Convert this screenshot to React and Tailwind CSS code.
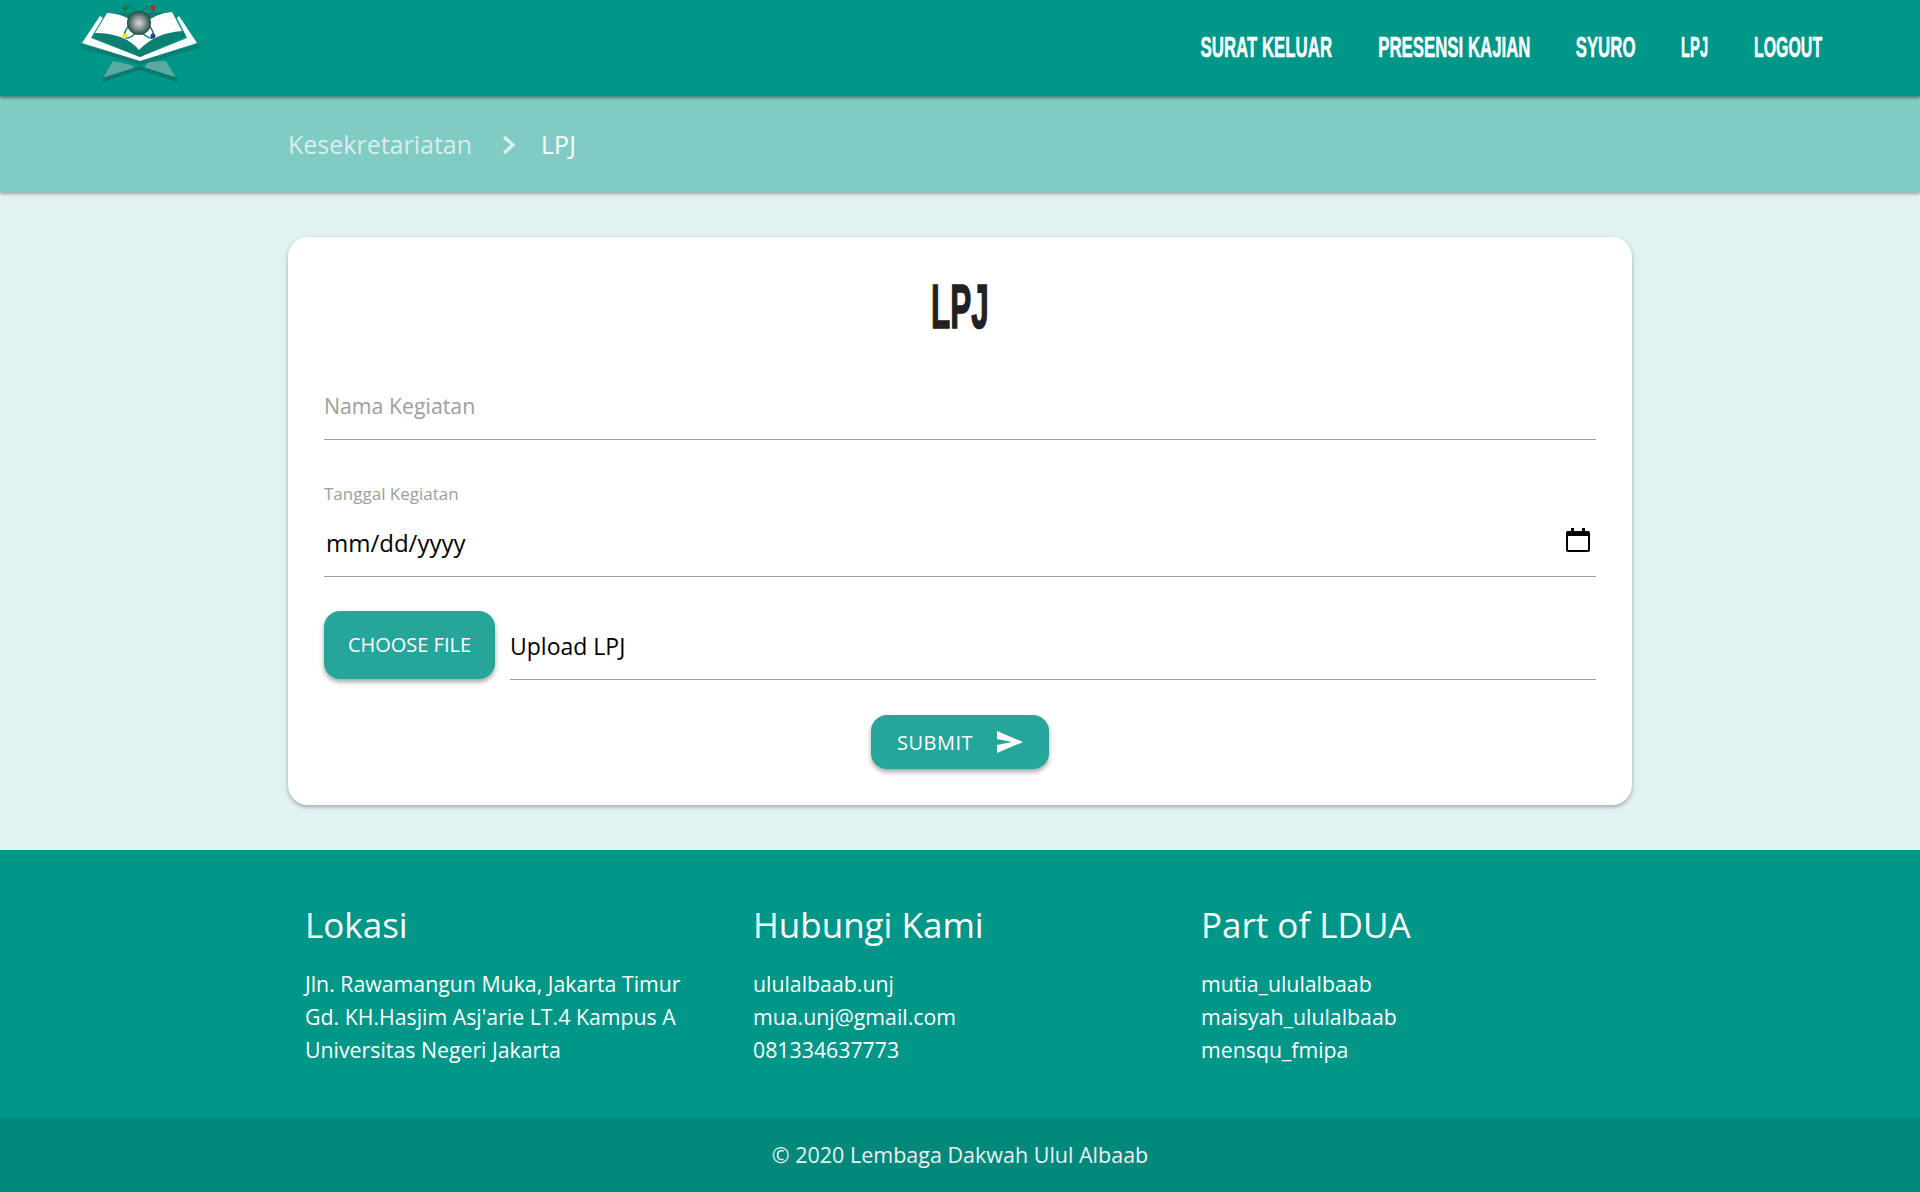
const sans = "font-['Open_Sans','Noto_Sans',sans-serif]";

const Logo = () => (
  <svg width="120" height="80" viewBox="80 4 120 80" aria-hidden="true">
    <defs>
      <radialGradient id="ball">
        <stop offset="0%" stopColor="#dcdcdc" />
        <stop offset="55%" stopColor="#7f8f8c" />
        <stop offset="100%" stopColor="#1f4a44" />
      </radialGradient>
    </defs>
    {/* stand */}
    <polygon points="103,78 113,61 131,65 136,70" fill="#5ba99f" />
    <polygon points="176,78 166,61 148,62 144,68" fill="#5ba99f" />
    <polygon points="102,78 140,66 178,78 177,82 140,70 103,82" fill="#0b7a6e" />
    {/* cover */}
    <polygon points="80,44 140,60 200,44 199,48 140,65 81,48" fill="#0b7f72" />
    <polygon points="82,43 100,16 103,18 91,38 140,57 187,38 177,18 179,16 197,43 140,61" fill="#fff" />
    {/* pages */}
    <polygon points="92,37 106,13 172,12 186,36 140,57" fill="#0b7f72" />
    <path d="M107,13 Q125,13 139,27 Q155,13 172,12 L182,31 Q155,33 139,50 Q125,33 95,33 Z" fill="#fff" />
    {/* atom */}
    <ellipse cx="139" cy="22" rx="6" ry="21" fill="none" stroke="#0b7f72" strokeWidth="1.5" transform="rotate(-42 139 22)" />
    <ellipse cx="139" cy="22" rx="6" ry="21" fill="none" stroke="#0b7f72" strokeWidth="1.5" transform="rotate(42 139 22)" />
    <circle cx="139" cy="23" r="12" fill="url(#ball)" />
    <circle cx="125" cy="8" r="2.5" fill="#1d7a2e" />
    <circle cx="153" cy="8" r="2.5" fill="#c9202c" />
    <circle cx="125" cy="36" r="2.5" fill="#f2e225" />
    <circle cx="153" cy="36" r="2.5" fill="#2b3a9e" />
  </svg>
);

const navLinks = [
  { label: "SURAT KELUAR", width: "w-[132px]", scale: "scale-x-[0.58]" },
  { label: "PRESENSI KAJIAN", width: "w-[154px]", scale: "scale-x-[0.58]" },
  { label: "SYURO", width: "w-[60px]", scale: "scale-x-[0.58]" },
  { label: "LPJ", width: "w-[28px]", scale: "scale-x-[0.51]" },
  { label: "LOGOUT", width: "w-[68px]", scale: "scale-x-[0.55]" },
];

const FooterCol = ({ title, lines }) => (
  <div className="w-[448px] px-[17px]">
    <h5 className="text-[35px] leading-[42px] mb-[21px]">{title}</h5>
    {lines.map((line) => (
      <p key={line} className="text-[21.3px] leading-[33px]">{line}</p>
    ))}
  </div>
);

export default function App() {
  return (
    <div className={`${sans} min-h-[1192px] bg-[#e0f2f1] flex flex-col`}>
      {/* Navbar */}
      <nav className="relative z-20 h-[96px] bg-[#009688] shadow-[0_2px_3px_rgba(0,0,0,0.4)] flex items-start justify-between pl-[80px] pr-[98px]">
        <div className="pt-[4px]">
          <Logo />
        </div>
        <ul className="flex pt-[28px] gap-[45px] font-['Liberation_Sans',sans-serif] font-bold text-white text-[29px] leading-[38px] [-webkit-text-stroke:0.5px_#fff]">
          {navLinks.map((link) => (
            <li key={link.label} className={`${link.width} flex justify-center whitespace-nowrap`}>
              <span className={`inline-block ${link.scale}`}>{link.label}</span>
            </li>
          ))}
        </ul>
      </nav>

      {/* Breadcrumb */}
      <div className="relative z-10 h-[96px] bg-[#80cbc4] shadow-[0_2px_3px_rgba(0,0,0,0.3)] flex items-center pl-[288px] pt-[2px] text-[25px]">
        <span className="text-white/70">Kesekretariatan</span>
        <svg className="ml-[30px] mr-[26px]" width="13" height="20" viewBox="0 0 13 20" aria-hidden="true">
          <path d="M2 2 L11 10 L2 18" fill="none" stroke="#fff" strokeOpacity="0.7" strokeWidth="3.5" />
        </svg>
        <span className="text-white">LPJ</span>
      </div>

      {/* Form card */}
      <main className="flex-1 pt-[45px] pb-[45px] flex justify-center">
        <form className="w-[1344px] h-[568px] bg-white rounded-[20px] shadow-[0_2px_4px_rgba(0,0,0,0.3)] px-[36px] pt-[33px]">
          <div className="h-[72px] flex justify-center whitespace-nowrap">
            <h1 className="inline-block scale-x-[0.5] text-[#212121] font-['Liberation_Sans',sans-serif] font-bold text-[63px] leading-[72px] [-webkit-text-stroke:1.5px_#212121]">LPJ</h1>
          </div>

          <input
            type="text"
            placeholder="Nama Kegiatan"
            className="mt-[30px] block w-full h-[68px] border-b border-[#9e9e9e] text-[21.3px] outline-none placeholder:text-[#9e9e9e]"
          />

          <label className="block mt-[42px] text-[17px] leading-[24px] text-[#9e9e9e]">Tanggal Kegiatan</label>
          <div className="mt-[13px] h-[58px] border-b border-[#9e9e9e] flex items-center justify-between pl-[2px] pr-[6px] pb-[9px]">
            <span className="text-[24px] text-black">mm/dd/yyyy</span>
            <svg width="24" height="26" viewBox="0 0 24 26" className="mb-[6px]" aria-hidden="true">
              <path d="M2 5 h20 a1 1 0 0 1 1 1 v17 a1 1 0 0 1 -1 1 h-20 a1 1 0 0 1 -1 -1 v-17 a1 1 0 0 1 1 -1z" fill="none" stroke="#000" strokeWidth="2" />
              <rect x="1" y="4" width="22" height="5" fill="#000" />
              <rect x="5" y="1" width="3" height="4" fill="#000" />
              <rect x="16" y="1" width="3" height="4" fill="#000" />
            </svg>
          </div>

          <div className="mt-[34px] flex items-start gap-[15px]">
            <button type="button" className="w-[171px] h-[68px] bg-[#26a69a] text-white text-[20px] rounded-[16px] shadow-[0_3px_5px_rgba(0,0,0,0.35)]">
              CHOOSE FILE
            </button>
            <div className="flex-1 h-[69px] pt-[3px] border-b border-[#9e9e9e] flex items-center text-[23px] text-black">Upload LPJ</div>
          </div>

          <div className="mt-[35px] flex justify-center">
            <button type="submit" className="w-[178px] h-[54px] pt-[2px] bg-[#26a69a] text-white text-[20px] tracking-[0.5px] rounded-[16px] shadow-[0_3px_5px_rgba(0,0,0,0.35)] flex items-center justify-center gap-[24px]">
              SUBMIT
              <svg width="26" height="22" viewBox="0 0 26 22" className="mb-[2px]" aria-hidden="true">
                <polygon points="0,0 26,11 0,22 0,14 15,11 0,8" fill="#fff" />
              </svg>
            </button>
          </div>
        </form>
      </main>

      {/* Footer */}
      <footer className="bg-[#009688] text-white">
        <div className="h-[268px] pt-[54px] flex pl-[288px]">
          <FooterCol title="Lokasi" lines={["Jln. Rawamangun Muka, Jakarta Timur", "Gd. KH.Hasjim Asj'arie LT.4 Kampus A", "Universitas Negeri Jakarta"]} />
          <FooterCol title="Hubungi Kami" lines={["ululalbaab.unj", "mua.unj@gmail.com", "081334637773"]} />
          <FooterCol title="Part of LDUA" lines={["mutia_ululalbaab", "maisyah_ululalbaab", "mensqu_fmipa"]} />
        </div>
        <div className="h-[74px] pt-[1px] bg-[#00897b] flex items-center justify-center text-[21.5px] text-white/90">
          © 2020 Lembaga Dakwah Ulul Albaab
        </div>
      </footer>
    </div>
  );
}
